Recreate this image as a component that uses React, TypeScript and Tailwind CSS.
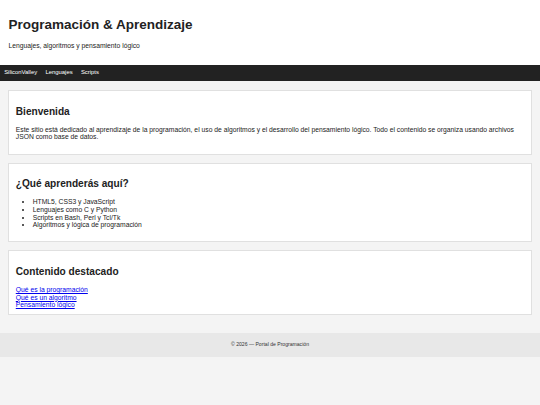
export default function App() {
  return (
    <div className="min-h-[405px] bg-[#f4f4f4] font-['Liberation_Sans',Arial,sans-serif] text-[#222]">
      <header className="bg-white px-[8.44px] pt-[8.44px] pb-[8.44px]">
        <h1 className="text-[13.5px] leading-[15.5px] font-bold mt-[9.05px] mb-[9.05px]">
          Programación &amp; Aprendizaje
        </h1>
        <p className="text-[6.75px] leading-[7.76px] mb-[6.75px]">
          Lenguajes, algoritmos y pensamiento lógico
        </p>
      </header>
      <nav className="bg-[#222] h-[16px] flex items-center px-[4.2px] gap-[8.3px] text-white text-[5.9px] leading-[7px]">
        <a href="#">SiliconValley</a>
        <a href="#">Lenguajes</a>
        <a href="#">Scripts</a>
      </nav>
      <main className="pt-[9px] px-[8.44px] pb-[17.5px]">
        <section className="bg-white border border-[#e0e0e0] px-[6.33px] pt-[6.33px] pb-[6px] mb-[8px]">
          <h2 className="text-[10.125px] leading-[11.64px] font-bold mt-[8.4px] mb-[8.4px]">Bienvenida</h2>
          <p className="text-[6.75px] leading-[7.7px] mb-[6.5px] text-[#222]">
            Este sitio está dedicado al aprendizaje de la programación, el uso de algoritmos y el desarrollo del pensamiento lógico. Todo el contenido se organiza usando archivos JSON como base de datos.
          </p>
        </section>
        <section className="bg-white border border-[#e0e0e0] px-[6.33px] pt-[6.33px] pb-[6px] mb-[8px]">
          <h2 className="text-[10.125px] leading-[11.64px] font-bold mt-[8.4px] mb-[8.4px]">¿Qué aprenderás aquí?</h2>
          <ul className="list-disc pl-[16.9px] text-[6.75px] leading-[7.6px] mb-[6.5px]">
            <li>HTML5, CSS3 y JavaScript</li>
            <li>Lenguajes como C y Python</li>
            <li>Scripts en Bash, Perl y Tcl/Tk</li>
            <li>Algoritmos y lógica de programación</li>
          </ul>
        </section>
        <section className="bg-white border border-[#e0e0e0] px-[6.33px] pt-[6.33px] pb-[5px]">
          <h2 className="text-[10.125px] leading-[11.64px] font-bold mt-[8.4px] mb-[8.4px]">Contenido destacado</h2>
          <div className="text-[6.75px] leading-[7.7px]">
            <a href="#" className="block w-fit text-[#0000ee] underline decoration-[#0000ee]">Qué es la programación</a>
            <a href="#" className="block w-fit text-[#0000ee] underline decoration-[#0000ee]">Qué es un algoritmo</a>
            <a href="#" className="block w-fit text-[#0000ee] underline decoration-[#0000ee]">Pensamiento lógico</a>
          </div>
        </section>
      </main>
      <footer className="bg-[#e8e8e8] h-[24px] flex items-center justify-center text-[5.1px] text-[#333]">
        © 2026 — Portal de Programación
      </footer>
    </div>
  );
}
